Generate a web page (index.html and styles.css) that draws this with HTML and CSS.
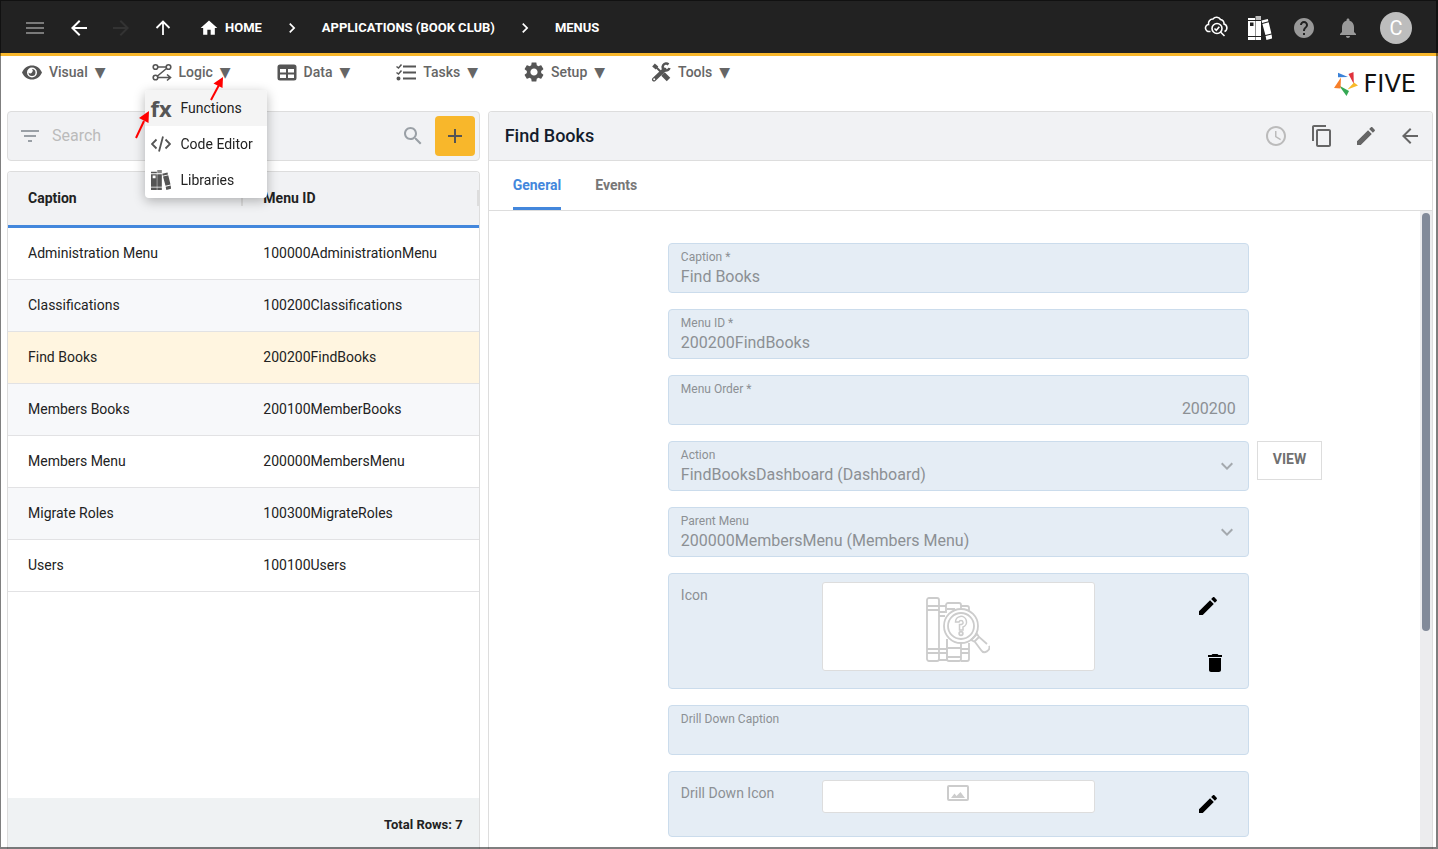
FILE: index.html
```html
<!DOCTYPE html>
<html lang="en">

<head>
    <meta charset="UTF-8">
    <meta name="viewport" content="width=device-width, initial-scale=1.0">
    <title>Five - Menus</title>
    <link rel="stylesheet" href="styles.css">
</head>

<body>
    <!-- shared icons -->
    <svg class="sprite" aria-hidden="true">
        <symbol id="i-back" viewBox="0 0 24 24"><path d="M20 11H7.83l5.59-5.59L12 4l-8 8 8 8 1.41-1.41L7.83 13H20v-2z"/></symbol>
        <symbol id="i-chevron" viewBox="0 0 24 24"><path d="M10 6L8.59 7.41 13.17 12l-4.58 4.59L10 18l6-6z"/></symbol>
        <symbol id="i-down" viewBox="0 0 24 24"><path d="M7.41 8.59L12 13.17l4.59-4.58L18 10l-6 6-6-6z"/></symbol>
        <symbol id="i-edit" viewBox="0 0 24 24"><path d="M3 17.25V21h3.75L17.81 9.94l-3.75-3.75L3 17.25zM20.71 7.04c.39-.39.39-1.02 0-1.41l-2.34-2.34c-.39-.39-1.02-.39-1.41 0l-1.83 1.83 3.75 3.75 1.83-1.83z"/></symbol>
        <symbol id="i-books" viewBox="0 0 24 24">
            <path d="M0 2h7v2H0zM0 5h7v15H0zM0 21h7v3H0zM7.500 5h5.500v15H7.500zM7.500 21h5.500v3H7.500z"/>
            <path d="M7.500 0H13v4H7.500z" opacity=".7"/>
            <path d="M13.500 4.600l6.300-1.600.6 2.300-6.300 1.600zM14.400 7.900l6.300-1.600 2.700 11.200-6 1.500zM17.600 20l6-1.500 .6 4-5.800 1.500z"/>
            <path class="hole" d="M2 6.500h3.500v3.500H2z"/>
        </symbol>
    </svg>

    <div class="app">
        <!-- top bar -->
        <header class="topbar">
            <nav class="topbar-nav">
                <button class="icon-btn dim" aria-label="Menu"><svg class="icon" viewBox="0 0 24 24"><path d="M3 18h18v-2H3v2zm0-5h18v-2H3v2zm0-7v2h18V6H3z"/></svg></button>
                <button class="icon-btn" aria-label="Back"><svg class="icon"><use href="#i-back"/></svg></button>
                <button class="icon-btn off" aria-label="Forward" disabled><svg class="icon flip"><use href="#i-back"/></svg></button>
                <button class="icon-btn" aria-label="Up"><svg class="icon" viewBox="0 0 24 24"><path d="M5.500 12L12 5.500l6.500 6.500M12 6V19" fill="none" stroke="currentColor" stroke-width="1.800"/></svg></button>
            </nav>
            <nav class="crumbs">
                <a href="#"><svg class="icon-s" viewBox="0 0 24 24"><path d="M10 20v-6h4v6h5v-8h3L12 3 2 12h3v8z"/></svg>HOME</a>
                <svg class="icon-s"><use href="#i-chevron"/></svg>
                <a href="#">APPLICATIONS (BOOK CLUB)</a>
                <svg class="icon-s"><use href="#i-chevron"/></svg>
                <a href="#">MENUS</a>
            </nav>
            <div class="topbar-tools">
                <button class="icon-btn" aria-label="Inspect"><svg class="icon" viewBox="0 0 24 24" fill="none" stroke="currentColor" stroke-width="1.600">
                    <path d="M6.500 15.500H5.500a3.500 3.500 0 0 1-1-7A4.500 4.500 0 0 1 9 3 4.600 4.600 0 0 1 16.500 3.500a4 4 0 0 1 3.500 4.500 4 4 0 0 1 .5 7.500"/>
                    <circle cx="13" cy="12.500" r="5"/><path d="M10.500 12.500l1.800 1.800 3-3.500M16.500 16l4 4"/></svg></button>
                <button class="icon-btn" aria-label="Library"><svg class="icon on-dark"><use href="#i-books"/></svg></button>
                <button class="icon-btn grey" aria-label="Help"><svg class="icon" viewBox="0 0 24 24"><path d="M12 2C6.480 2 2 6.480 2 12s4.480 10 10 10 10-4.480 10-10S17.520 2 12 2zm1 17h-2v-2h2v2zm2.070-7.750l-.9.920C13.450 12.900 13 13.500 13 15h-2v-.5c0-1.100.45-2.100 1.170-2.830l1.240-1.260c.37-.36.59-.86.59-1.410 0-1.100-.9-2-2-2s-2 .9-2 2H8c0-2.210 1.790-4 4-4s4 1.790 4 4c0 .88-.36 1.680-.93 2.250z"/></svg></button>
                <button class="icon-btn grey" aria-label="Notifications"><svg class="icon" viewBox="0 0 24 24"><path d="M12 22c1.100 0 2-.9 2-2h-4c0 1.100.89 2 2 2zm6-6v-5c0-3.070-1.640-5.640-4.500-6.320V4c0-.83-.67-1.500-1.500-1.500s-1.500.67-1.500 1.500v.68C7.630 5.360 6 7.920 6 11v5l-2 2v1h16v-1l-2-2z"/></svg></button>
                <button class="avatar">C</button>
            </div>
        </header>

        <!-- main menu -->
        <div class="menubar">
            <ul class="menus">
                <li><button class="menu-btn"><svg class="icon-m" viewBox="0 0 20 20"><path fill-rule="evenodd" d="M0 10.500C2 6 5.600 3.500 10 3.500s8 2.500 10 7c-2 4.500-5.600 7-10 7s-8-2.500-10-7zm5 0a5 5 0 1 0 10 0 5 5 0 0 0-10 0z"/><path d="M10 7a3.500 3.500 0 1 1-3.500 3.500A2 2 0 0 0 10 7z"/></svg>Visual <span>▼</span></button></li>
                <li class="open"><button class="menu-btn"><svg class="icon-m" viewBox="0 0 20 20" fill="none" stroke="currentColor" stroke-width="1.600">
                    <circle cx="3.500" cy="5" r="2.300"/><circle cx="16.500" cy="5" r="2.300"/><circle cx="3.500" cy="15.500" r="2.300"/><path d="M6 5h8M14.500 6.500l-9 7.500M6 15.500h12M15 12.500l3.500 3-3.500 3"/></svg>Logic <span>▼</span></button>
                    <!-- drop down -->
                    <ul class="dropdown">
                        <li><button class="hover"><span class="fx">fx</span>Functions</button></li>
                        <li><button><svg class="icon-m" viewBox="0 0 20 20" fill="none" stroke="currentColor" stroke-width="1.800"><path d="M5.500 5.500L1 10l4.500 4.500M14.500 5.500L19 10l-4.500 4.500M12 2.500l-4 15"/></svg>Code Editor</button></li>
                        <li><button><svg class="icon-m on-light"><use href="#i-books"/></svg>Libraries</button></li>
                    </ul>
                    <svg class="arrow arrow-menu" viewBox="0 0 16 24"><path d="M2 23L10 8" stroke="#f00" stroke-width="2"/><path d="M14 0L13.500 11 4.500 6.500z" fill="#f00"/></svg>
                    <svg class="arrow arrow-item" viewBox="0 0 16 28"><path d="M2 27L10 10" stroke="#f00" stroke-width="2"/><path d="M15 0L14.500 12 5 7z" fill="#f00"/></svg>
                </li>
                <li><button class="menu-btn"><svg class="icon-m" viewBox="0 0 20 20"><path fill-rule="evenodd" d="M3 2.500h14a2.500 2.500 0 0 1 2.500 2.500v11a2.500 2.500 0 0 1-2.500 2.500H3A2.500 2.500 0 0 1 .5 16V5A2.500 2.500 0 0 1 3 2.500zM3 7v3.500h6V7zm8 0v3.500h6V7zm-8 5.500V16h6v-3.500zm8 0V16h6v-3.500z"/></svg>Data <span>▼</span></button></li>
                <li><button class="menu-btn"><svg class="icon-m" viewBox="0 0 20 20" fill="none" stroke="currentColor" stroke-width="2"><path d="M7 4.500h13M7 10.500h13M7 16.500h13"/><path d="M.5 4.500L2.500 6l3-3.500M.5 10.500l2 1.500 3-3.500" stroke-width="1.500"/><circle cx="2.500" cy="16.500" r="1" /></svg>Tasks <span>▼</span></button></li>
                <li><button class="menu-btn"><svg class="icon-m" viewBox="2 2 20 20"><path d="M19.140 12.940c.04-.3.06-.61.06-.94 0-.32-.02-.64-.07-.94l2.030-1.580c.18-.14.23-.41.12-.61l-1.920-3.320c-.12-.22-.37-.29-.59-.22l-2.390.96c-.5-.38-1.030-.7-1.620-.94l-.36-2.540c-.04-.24-.24-.41-.48-.41h-3.840c-.24 0-.43.17-.47.41l-.36 2.540c-.59.24-1.130.57-1.620.94l-2.390-.96c-.22-.08-.47 0-.59.22L2.740 8.870c-.12.21-.08.47.12.61l2.030 1.580c-.05.3-.09.63-.09.94s.02.64.07.94l-2.030 1.580c-.18.14-.23.41-.12.61l1.920 3.320c.12.22.37.29.59.22l2.390-.96c.5.38 1.030.7 1.620.94l.36 2.540c.05.24.24.41.48.41h3.840c.24 0 .44-.17.47-.41l.36-2.540c.59-.24 1.130-.56 1.620-.94l2.390.96c.22.08.47 0 .59-.22l1.920-3.320c.12-.22.07-.47-.12-.61l-2.010-1.580zM12 15.600c-1.980 0-3.600-1.620-3.600-3.600s1.620-3.600 3.600-3.600 3.600 1.620 3.600 3.600-1.620 3.600-3.600 3.600z"/></svg>Setup <span>▼</span></button></li>
                <li><button class="menu-btn"><svg class="icon-m" viewBox="0 0 20 20" fill="none" stroke="currentColor"><path d="M2.500 3l3.500 3" stroke-width="4"/><path d="M5 5l7 7" stroke-width="2"/><path d="M12 12l5.500 5.500" stroke-width="5"/><path d="M3 17.500L13.500 7.500" stroke-width="4" stroke-linecap="round"/><path d="M17.500 2.500A3.500 3.500 0 1 0 18.500 6" stroke-width="2.500"/><circle cx="3.200" cy="17.300" r="1" fill="#fff" stroke="none"/></svg>Tools <span>▼</span></button></li>
            </ul>
            <a class="logo" href="#">
                <svg viewBox="0 0 24 24"><path fill="#3b82d8" d="M4 .7l10 4.300-10 .2z"/><path fill="#e0323c" d="M14.500 2l5-2 .3 12z"/><path fill="#f8b92a" d="M20 10.500l4 3-10.500 4z"/><path fill="#34a853" d="M5 13.500l10 5.500-2.500 5z"/><path fill="#f77f2a" d="M7 5.500l-.5 11-6.500-.5z"/></svg>
                FIVE
            </a>
        </div>

        <main class="content">
            <!-- list of menus -->
            <section class="list">
                <form class="search">
                    <svg class="icon" viewBox="0 0 24 24"><path d="M10 18h4v-2h-4v2zM3 6v2h18V6H3zm3 7h12v-2H6v2z"/></svg>
                    <input type="text" placeholder="Search" aria-label="Search">
                    <svg class="icon" viewBox="0 0 24 24"><path d="M15.500 14h-.79l-.28-.27C15.410 12.590 16 11.110 16 9.500 16 5.910 13.090 3 9.500 3S3 5.910 3 9.500 5.910 16 9.500 16c1.610 0 3.090-.59 4.230-1.570l.27.28v.79l5 4.990L20.490 19l-4.990-5zm-6 0C7.010 14 5 11.990 5 9.500S7.010 5 9.500 5 14 7.010 14 9.500 11.990 14 9.500 14z"/></svg>
                    <button type="button" class="add" aria-label="Add"><svg class="icon" viewBox="0 0 24 24"><path d="M19 13h-6v6h-2v-6H5v-2h6V5h2v6h6v2z"/></svg></button>
                </form>
                <div class="grid">
                    <table>
                        <thead>
                            <tr><th><div>Caption</div></th><th><div>Menu ID</div></th></tr>
                        </thead>
                        <tbody>
                            <tr><td>Administration Menu</td><td>100000AdministrationMenu</td></tr>
                            <tr><td>Classifications</td><td>100200Classifications</td></tr>
                            <tr class="selected"><td>Find Books</td><td>200200FindBooks</td></tr>
                            <tr><td>Members Books</td><td>200100MemberBooks</td></tr>
                            <tr><td>Members Menu</td><td>200000MembersMenu</td></tr>
                            <tr><td>Migrate Roles</td><td>100300MigrateRoles</td></tr>
                            <tr><td>Users</td><td>100100Users</td></tr>
                        </tbody>
                    </table>
                    <div class="total">Total Rows: 7</div>
                </div>
            </section>

            <!-- selected record -->
            <section class="detail">
                <div class="detail-head">
                    <h1>Find Books</h1>
                    <button class="icon-btn light" aria-label="History"><svg class="icon" viewBox="0 0 24 24"><path d="M11.990 2C6.470 2 2 6.480 2 12s4.470 10 9.990 10C17.520 22 22 17.520 22 12S17.520 2 11.990 2zM12 20c-4.420 0-8-3.580-8-8s3.580-8 8-8 8 3.580 8 8-3.580 8-8 8zM12.500 7H11v6l5.250 3.150.75-1.230-4.500-2.670z"/></svg></button>
                    <button class="icon-btn" aria-label="Copy"><svg class="icon" viewBox="0 0 24 24"><path d="M16 1H4c-1.100 0-2 .9-2 2v14h2V3h12V1zm3 4H8c-1.100 0-2 .9-2 2v14c0 1.100.9 2 2 2h11c1.100 0 2-.9 2-2V7c0-1.100-.9-2-2-2zm0 16H8V7h11v14z"/></svg></button>
                    <button class="icon-btn" aria-label="Edit"><svg class="icon"><use href="#i-edit"/></svg></button>
                    <button class="icon-btn" aria-label="Close"><svg class="icon"><use href="#i-back"/></svg></button>
                </div>
                <div class="tabs">
                    <button class="active">General</button>
                    <button>Events</button>
                </div>
                <div class="scroll">
                    <form class="fields">
                        <div class="field">
                            <label for="caption">Caption *</label>
                            <input id="caption" type="text" value="Find Books" disabled>
                        </div>
                        <div class="field">
                            <label for="menuid">Menu ID *</label>
                            <input id="menuid" type="text" value="200200FindBooks" disabled>
                        </div>
                        <div class="field">
                            <label for="order">Menu Order *</label>
                            <input id="order" class="num" type="text" value="200200" disabled>
                        </div>
                        <div class="field">
                            <label for="action">Action</label>
                            <select id="action" disabled><option>FindBooksDashboard (Dashboard)</option></select>
                            <svg class="icon"><use href="#i-down"/></svg>
                        </div>
                        <button type="button" class="view">VIEW</button>
                        <div class="field">
                            <label for="parent">Parent Menu</label>
                            <select id="parent" disabled><option>200000MembersMenu (Members Menu)</option></select>
                            <svg class="icon"><use href="#i-down"/></svg>
                        </div>
                        <div class="field picture">
                            <span>Icon</span>
                            <div class="preview tall">
                                <svg viewBox="0 0 64 66" width="64" height="66" fill="none" stroke="#ccc" stroke-width="1.800">
                                    <rect x="1" y="1" width="12" height="63" rx="2"/><path d="M1 9h12M1 13h12M1 52h12M1 56h12"/>
                                    <path d="M13 9h7M13 15h6M13 19h6M13 52h8M13 56h8M13 63h8M21 42v22"/>
                                    <path d="M20 16V8a2 2 0 0 1 2-2h11a2 2 0 0 1 2 2v3M21 12h8M21 42v20a2 2 0 0 0 2 2h10a2 2 0 0 0 2-2V46M21 51h14M21 60h14"/>
                                    <path d="M35 9h6a2 2 0 0 1 2 2v3M35 52h8M35 56h8M43 46v16a2 2 0 0 1-2 2h-6"/>
                                    <circle cx="35" cy="29" r="17" fill="#fff"/><circle cx="35" cy="29" r="13"/>
                                    <path d="M29.500 25a5.500 5.500 0 1 1 7.500 5v3h-3.500v-5.500c3 0 4-1 3.500-2.500-.5-2-3.500-2-4 0z" stroke-width="1.500"/><circle cx="35" cy="36.500" r="1.800"/>
                                    <path d="M45 43l6-6 2 3 8 7M45 43l4 2 6 8c3 5 10 0 8-4M48 45l5-5"/>
                                </svg>
                            </div>
                            <div class="actions">
                                <button type="button" class="icon-btn" aria-label="Edit icon"><svg class="icon"><use href="#i-edit"/></svg></button>
                                <button type="button" class="icon-btn" aria-label="Delete icon"><svg class="icon" viewBox="0 0 24 24"><path d="M6 19c0 1.100.9 2 2 2h8c1.100 0 2-.9 2-2V7H6v12zM19 4h-3.500l-1-1h-5l-1 1H5v2h14V4z"/></svg></button>
                            </div>
                        </div>
                        <div class="field">
                            <label for="drill">Drill Down Caption</label>
                            <input id="drill" type="text" value="" disabled>
                        </div>
                        <div class="field picture">
                            <span>Drill Down Icon</span>
                            <div class="preview">
                                <svg viewBox="0 0 24 18" width="24" height="18"><path fill-rule="evenodd" d="M3 1h18a2 2 0 0 1 2 2v12a2 2 0 0 1-2 2H3a2 2 0 0 1-2-2V3a2 2 0 0 1 2-2zm0 2v12h18V3z"/><path d="M5 14l3.500-4.500 2 2.500L14.500 8l4.500 6z"/></svg>
                            </div>
                            <div class="actions">
                                <button type="button" class="icon-btn" aria-label="Edit drill down icon"><svg class="icon"><use href="#i-edit"/></svg></button>
                            </div>
                        </div>
                    </form>
                    <div class="track"><div class="thumb"></div></div>
                </div>
            </section>
        </main>
    </div>
</body>

</html>
```
FILE: styles.css
```css
* {
    margin: 0;
    padding: 0;
    box-sizing: border-box;
}

body {
    font-family: Roboto, "Liberation Sans", sans-serif;
    font-size: 14px;
    line-height: 20px;
    color: #222;
    background: #fff;
}

button,
input,
select {
    font: inherit;
    color: inherit;
    border: 0;
    background: none;
}

ul {
    list-style: none;
}

a {
    color: inherit;
    text-decoration: none;
}

svg {
    display: block;
    flex: none;
    fill: currentColor;
}

svg[fill="none"] {
    fill: none;
}

.sprite {
    position: absolute;
    width: 0;
    height: 0;
}

.icon {
    width: 24px;
    height: 24px;
}

.icon-m,
.icon-s {
    width: 20px;
    height: 20px;
}

.icon-btn {
    display: block;
    flex: none;
}

.flip {
    transform: scaleX(-1);
}

.app {
    height: 100vh;
    display: flex;
    flex-direction: column;
    overflow: hidden;
}

/* window frame */
.app::after {
    content: '';
    position: fixed;
    inset: 0;
    border: solid rgba(0, 0, 0, .5);
    border-width: 1px 2px 2px 1px;
    pointer-events: none;
}

/* top bar */
.topbar {
    flex: none;
    height: 56px;
    display: flex;
    align-items: center;
    padding: 3px 26px 0 23px;
    color: #fff;
    background: #222;
    border-bottom: 3px solid #f8b72b;
}

.topbar-nav {
    display: flex;
    gap: 18px;
    margin-right: 24px;
}

.topbar-nav .dim {
    margin-right: 2px;
    color: #7a7a7a;
}

.topbar-nav .off {
    color: #333;
}

.crumbs {
    display: flex;
    align-items: center;
    gap: 20px;
    font-size: 13px;
    font-weight: 700;
}

.crumbs a {
    display: flex;
    align-items: center;
    gap: 6px;
}

.topbar-tools {
    display: flex;
    align-items: center;
    gap: 20px;
    margin-left: auto;
}

.grey {
    color: #999;
}

.on-dark {
    --hole: #222;
}

.on-light {
    --hole: #fff;
}

.hole {
    fill: var(--hole);
}

.avatar {
    width: 32px;
    height: 32px;
    border-radius: 50%;
    font-size: 20px;
    background: #bdbdbd;
}

/* main menu */
.menubar {
    flex: none;
    height: 55px;
    display: flex;
    justify-content: space-between;
    padding: 6px 22px 0 22px;
}

.menus {
    display: flex;
    gap: 46px;
}

.open {
    position: relative;
}

.menu-btn {
    display: flex;
    align-items: center;
    gap: 7px;
    font-weight: 500;
    color: #666;
}

.menu-btn svg {
    color: #555;
}

.menu-btn span {
    font-family: "DejaVu Sans", sans-serif;
}

.logo {
    display: flex;
    align-items: center;
    gap: 6px;
    padding-bottom: 6px;
    font: 24px "DejaVu Sans", sans-serif;
    color: #111;
}

.logo svg {
    width: 24px;
    height: 24px;
}

.dropdown {
    position: absolute;
    z-index: 2;
    left: -7px;
    top: 28px;
    width: 122px;
    background: #fff;
    border-radius: 4px;
    box-shadow: 0 3px 12px rgba(0, 0, 0, .28);
    overflow: hidden;
}

.dropdown button {
    display: flex;
    align-items: center;
    gap: 10px;
    width: 100%;
    height: 36px;
    padding: 0 6px;
    white-space: nowrap;
}

.dropdown .hover {
    background: #f4f4f4;
}

.dropdown svg,
.fx {
    color: #555;
}

.fx {
    width: 20px;
    font: 700 22px/34px "Noto Sans", sans-serif;
}

.arrow {
    position: absolute;
    z-index: 3;
}

.arrow-menu {
    left: 57px;
    top: 15px;
    width: 16px;
    height: 24px;
}

.arrow-item {
    left: -18px;
    top: 49px;
    width: 16px;
    height: 28px;
}

/* two panels */
.content {
    flex: 1;
    min-height: 0;
    display: grid;
    grid-template-columns: minmax(0, 1fr) minmax(0, 2fr);
    gap: 8px;
    padding: 0 5px 0 7px;
}

.list {
    display: flex;
    flex-direction: column;
    gap: 10px;
}

.search {
    height: 50px;
    display: flex;
    align-items: center;
    gap: 10px;
    padding: 0 4px 0 10px;
    color: #9aa0a6;
    background: #f1f2f4;
    border: 1px solid #ddd;
    border-radius: 4px;
}

.search input {
    flex: 1;
    min-width: 0;
    font-size: 16px;
    outline: 0;
}

.search input::placeholder {
    color: #bbb;
}

.add {
    width: 40px;
    height: 40px;
    display: grid;
    place-items: center;
    color: #555;
    background: #f8b72b;
    border-radius: 4px;
}

.grid {
    flex: 1;
    display: flex;
    flex-direction: column;
    border: 1px solid #ddd;
    border-bottom: 0;
    border-radius: 4px 4px 0 0;
    overflow: hidden;
}

table {
    width: 100%;
    table-layout: fixed;
    border-collapse: separate;
    border-spacing: 0;
}

th {
    height: 56px;
    padding: 0 0 2px 20px;
    text-align: left;
    font-weight: 700;
    background: #f1f2f4;
    border-bottom: 3px solid #4387dc;
}

th div {
    height: 16px;
    line-height: 16px;
    border-right: 2px solid #ddd;
}

td {
    height: 52px;
    padding: 0 0 2px 20px;
    border-bottom: 1px solid #e2e2e4;
}

tbody tr:nth-child(even) {
    background: #f7f8fa;
}

tbody tr.selected {
    background: #fff5e0;
}

.total {
    margin-top: auto;
    height: 51px;
    padding: 17px 16px 0 0;
    text-align: right;
    font-size: 13px;
    font-weight: 700;
    background: #eff2f3;
}

/* record */
.detail {
    display: flex;
    flex-direction: column;
    border: 1px solid #ddd;
    border-bottom: 0;
    border-radius: 4px 4px 0 0;
    overflow: hidden;
}

.detail-head {
    flex: none;
    height: 49px;
    display: flex;
    align-items: center;
    gap: 20px;
    padding: 0 10px 0 16px;
    color: #666;
    background: #f1f2f4;
    border-bottom: 1px solid #ddd;
}

.detail-head h1 {
    flex: 1;
    font-size: 18px;
    font-weight: 500;
    color: #141c2c;
}

.detail-head .light {
    margin-right: 2px;
    color: #bbb;
}

.tabs {
    flex: none;
    height: 50px;
    display: flex;
    gap: 34px;
    padding-left: 24px;
    border-bottom: 1px solid #ddd;
}

.tabs button {
    font-weight: 700;
    color: #777;
    border-bottom: 3px solid transparent;
    padding-top: 1px;
}

.tabs .active {
    color: #4387dc;
    border-bottom-color: #4387dc;
}

.scroll {
    flex: 1;
    min-height: 0;
    display: flex;
}

.fields {
    flex: 1;
    display: grid;
    grid-template-columns: 1fr minmax(0, 581px) 1fr;
    align-content: start;
    gap: 16px 8px;
    padding: 32px 0 0 8px;
}

.field {
    grid-column: 2;
    position: relative;
    height: 50px;
    display: flex;
    flex-direction: column;
    padding: 5px 12px;
    color: #8c9094;
    background: #e5edf5;
    border: 1px solid #cbdcec;
    border-radius: 4px;
}

.field label {
    font-size: 12px;
    line-height: 16px;
}

.field input,
.field select {
    width: 100%;
    height: 22px;
    font-size: 16px;
    color: #8c9094;
    opacity: 1;
    appearance: none;
}

.field select {
    padding-top: 2px;
}

.field .num {
    text-align: right;
}

/* arrow of the drop downs */
.field > .icon {
    position: absolute;
    right: 9px;
    top: 12px;
    color: #a4a9ae;
    pointer-events: none;
}

.view {
    grid-column: 3;
    justify-self: start;
    height: 39px;
    padding: 0 15px 3px;
    font-weight: 700;
    color: #707070;
    border: 1px solid #ddd;
}

.picture {
    height: auto;
    display: grid;
    grid-template-columns: 1fr 273px 1fr;
    padding: 8px 12px;
}

.picture > span {
    padding-top: 3px;
}

.preview {
    height: 33px;
    margin-bottom: 15px;
    display: flex;
    justify-content: center;
    padding-top: 3px;
    color: #ccc;
    background: #fff;
    border: 1px solid #ddd;
    border-radius: 3px;
}

.tall {
    height: 89px;
    margin-bottom: 9px;
    padding-top: 14px;
}

.actions {
    display: flex;
    flex-direction: column;
    align-items: flex-end;
    gap: 33px;
    padding: 12px 9px 0 0;
    color: #000;
}

.actions .icon-btn:first-child {
    margin-right: 7px;
}

.track {
    width: 12px;
    padding: 2px;
    background: #ececee;
}

.thumb {
    height: 66%;
    background: #828a99;
    border-radius: 4px;
}
```
